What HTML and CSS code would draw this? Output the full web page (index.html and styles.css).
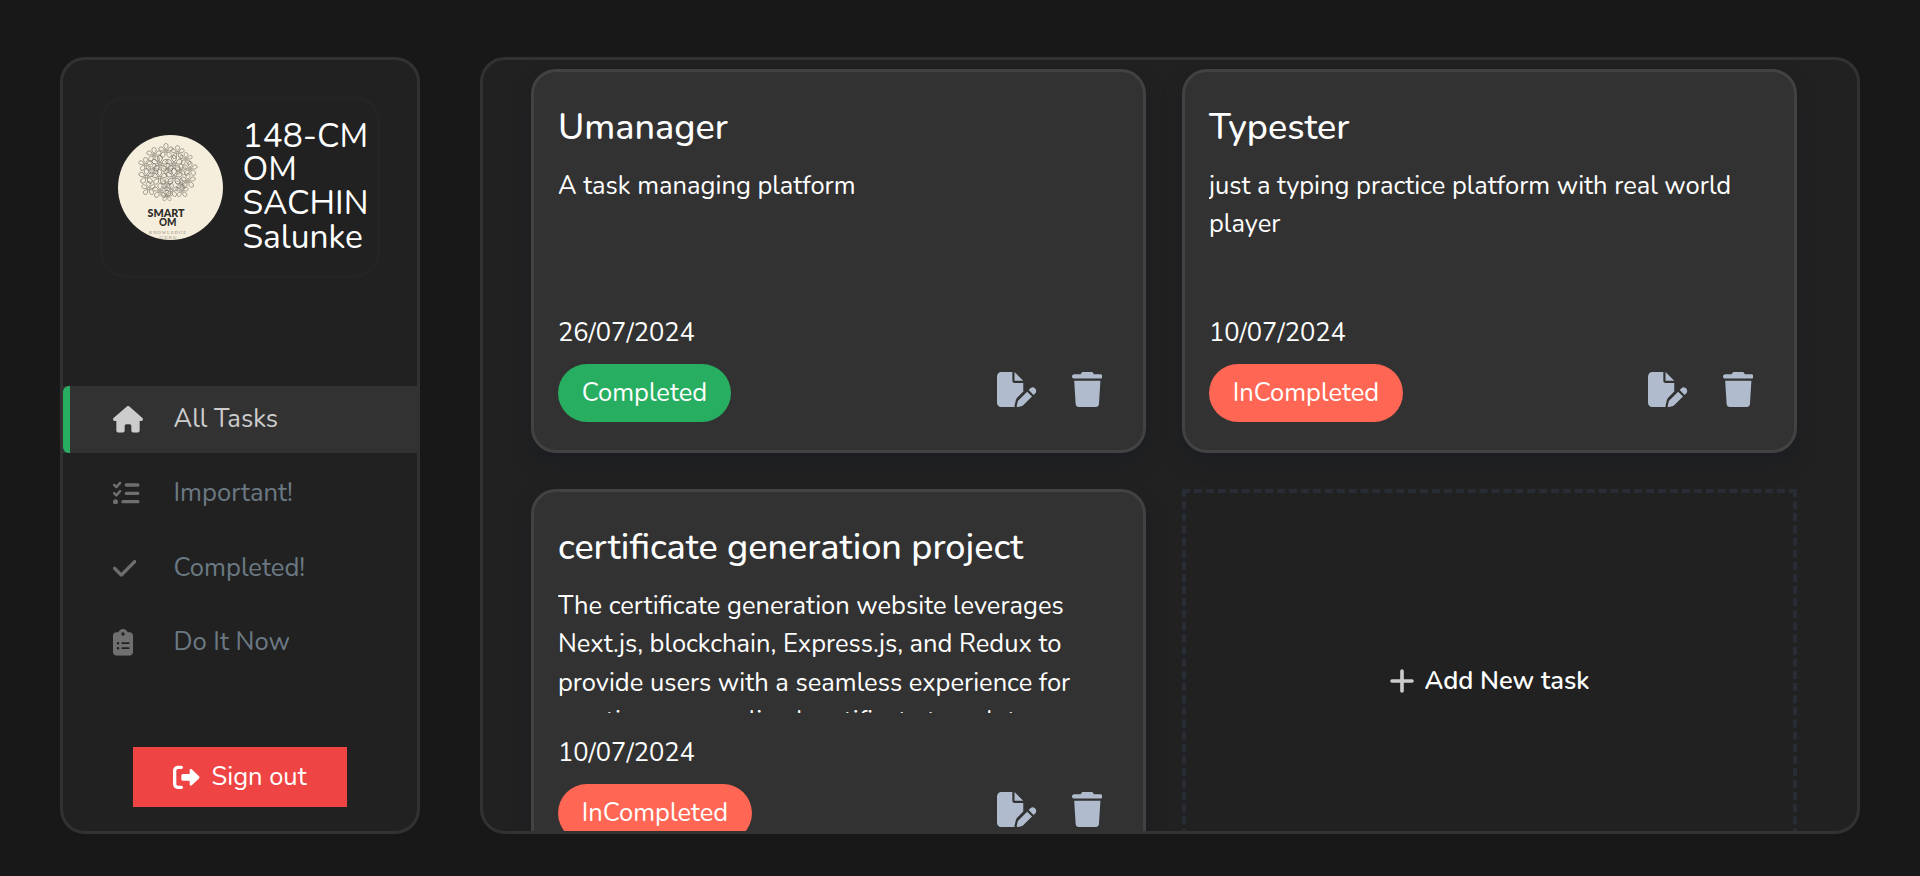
FILE: index.html
```html
<!DOCTYPE html>
<html lang="en">
<head>
<meta charset="utf-8">
<title>Tasks</title>
<link rel="stylesheet" href="styles.css">
</head>
<body>
<svg class="defs" aria-hidden="true">
  <symbol id="i-home" viewBox="0 0 576 512"><path d="M575.8 255.5c0 18-15 32.100-32 32.100h-32l.7 160.200c0 2.700-.2 5.400-.5 8.100V472c0 22.100-17.900 40-40 40H456c-1.100 0-2.200 0-3.300-.1c-1.400.1-2.800.1-4.200.1H416 392c-22.100 0-40-17.900-40-40V448 384c0-17.700-14.300-32-32-32H256c-17.700 0-32 14.300-32 32v64 24c0 22.100-17.900 40-40 40H160 128.100c-1.500 0-3-.1-4.500-.2c-1.200.1-2.400.2-3.600.2H104c-22.100 0-40-17.900-40-40V360c0-.9 0-1.900.1-2.800V287.600H32c-18 0-32-14-32-32.100c0-9 3-17 10-24L266.400 8c7-7 15-8 22-8s15 2 21 7L564.800 231.500c8 7 12 15 11 24z"/></symbol>
  <symbol id="i-list" viewBox="0 0 512 512"><path d="M152.100 38.200c9.900 8.900 10.700 24 1.800 33.900l-72 80c-4.400 4.900-10.600 7.800-17.200 7.900s-12.900-2.400-17.600-7L7 113C-2.300 103.600-2.300 88.400 7 79s24.600-9.400 33.900 0l22.100 22.100 55.100-61.200c8.900-9.900 24-10.700 33.900-1.800zm0 160c9.900 8.900 10.700 24 1.800 33.900l-72 80c-4.400 4.900-10.600 7.800-17.200 7.900s-12.900-2.400-17.600-7L7 273c-9.400-9.400-9.400-24.600 0-33.900s24.600-9.400 33.900 0l22.100 22.100 55.100-61.200c8.900-9.900 24-10.700 33.900-1.800zM224 96c0-17.700 14.300-32 32-32H480c17.700 0 32 14.300 32 32s-14.300 32-32 32H256c-17.700 0-32-14.300-32-32zm0 160c0-17.700 14.300-32 32-32H480c17.700 0 32 14.300 32 32s-14.300 32-32 32H256c-17.700 0-32-14.300-32-32zM160 416c0-17.700 14.300-32 32-32H480c17.700 0 32 14.300 32 32s-14.300 32-32 32H192c-17.700 0-32-14.300-32-32zM48 368a48 48 0 1 1 0 96 48 48 0 1 1 0-96z"/></symbol>
  <symbol id="i-check" viewBox="0 0 448 512"><path d="M438.600 105.400c12.500 12.500 12.500 32.800 0 45.300l-256 256c-12.500 12.500-32.800 12.500-45.300 0l-128-128c-12.500-12.500-12.500-32.800 0-45.300s32.800-12.500 45.300 0L160 338.700 393.400 105.400c12.500-12.500 32.800-12.500 45.300 0z"/></symbol>
  <symbol id="i-clip" viewBox="0 0 384 512"><path d="M192 0c-41.800 0-77.400 26.700-90.500 64H64C28.700 64 0 92.700 0 128V448c0 35.300 28.700 64 64 64H320c35.300 0 64-28.700 64-64V128c0-35.300-28.700-64-64-64H282.500C269.400 26.700 233.800 0 192 0zm0 64a32 32 0 1 1 0 64 32 32 0 1 1 0-64zM72 272a24 24 0 1 1 48 0 24 24 0 1 1 -48 0zm104-16H304c8.800 0 16 7.200 16 16s-7.200 16-16 16H176c-8.800 0-16-7.200-16-16s7.200-16 16-16zM72 368a24 24 0 1 1 48 0 24 24 0 1 1 -48 0zm88 0c0-8.800 7.200-16 16-16H304c8.800 0 16 7.200 16 16s-7.200 16-16 16H176c-8.800 0-16-7.200-16-16z"/></symbol>
  <symbol id="i-out" viewBox="0 0 512 512"><path d="M160 96c17.700 0 32-14.300 32-32s-14.300-32-32-32H96C43 32 0 75 0 128V384c0 53 43 96 96 96h64c17.700 0 32-14.300 32-32s-14.300-32-32-32H96c-17.700 0-32-14.300-32-32V128c0-17.700 14.300-32 32-32h64zM504.500 273.400c4.800-4.500 7.500-10.800 7.500-17.400s-2.700-12.900-7.500-17.400l-144-136c-7-6.600-17.200-8.400-26-4.600s-14.500 12.500-14.500 22v72H192c-17.700 0-32 14.300-32 32v64c0 17.700 14.300 32 32 32H320v72c0 9.600 5.700 18.200 14.500 22s19 2 26-4.600l144-136z"/></symbol>
  <symbol id="i-edit" viewBox="0 0 576 512"><path d="M0 64C0 28.700 28.700 0 64 0H224V128c0 17.700 14.300 32 32 32H384V285.700l-86.800 86.800c-10.300 10.300-17.500 23.100-21 37.200l-18.700 74.900c-2.300 9.200-1.800 18.800 1.300 27.500H64c-35.300 0-64-28.700-64-64V64zm384 64H256V0L384 128zM549.800 235.700l14.400 14.400c15.600 15.600 15.600 40.900 0 56.600l-29.400 29.400-71-71 29.400-29.400c15.600-15.600 40.900-15.600 56.600 0zM311.900 417L441.100 287.800l71 71L382.900 487.900c-4.100 4.100-9.200 7-14.900 8.400l-60.100 15c-5.500 1.400-11.200-.2-15.200-4.200s-5.600-9.700-4.200-15.200l15-60.100c1.400-5.600 4.300-10.800 8.400-14.900z"/></symbol>
  <symbol id="i-trash" viewBox="0 0 448 512"><path d="M135.200 17.700C140.600 6.800 151.700 0 163.800 0H284.200c12.100 0 23.200 6.800 28.600 17.700L320 32h96c17.700 0 32 14.300 32 32s-14.300 32-32 32H32C14.300 96 0 81.700 0 64S14.300 32 32 32h96l7.200-14.300zM32 128H416L394.800 467c-1.600 25.300-22.600 45-47.900 45H101.100c-25.300 0-46.300-19.700-47.900-45L32 128z"/></symbol>
  <symbol id="i-plus" viewBox="0 0 24 24"><path d="M12 2v20M2 12h20" fill="none" stroke="currentColor" stroke-width="3.600" stroke-linecap="round"/></symbol>
  <symbol id="flower" viewBox="-10 -10 20 20"><g fill="none" stroke="#47453f" stroke-width=".8"><circle r="1.500"/><path d="M0-2C-4-5-3-9 0-9.500 3-9 4-5 0-2M2-1C4-6 8-6 9-3 9 0 5 1 2-1M1.500 1.500C6 1 8 5 6 7.500 3 9 0 6 1.500 1.500M-1.500 1.500C0 6-3 9-6 7.500-8 5-6 1-1.500 1.500M-2-1C-5 1-9 0-9-3-8-6-4-6-2-1"/></g></symbol>
</svg>

<div class="app">
  <nav class="sidebar">
    <div class="profile">
      <svg class="avatar" viewBox="0 0 105 105">
        <circle cx="52.500" cy="52.500" r="52.500" fill="#f6eedd"/>
        <g opacity=".8">
          <use href="#flower" x="40" y="8" width="16" height="16"/><use href="#flower" x="52" y="10" width="15" height="15"/>
          <use href="#flower" x="28" y="12" width="16" height="16"/><use href="#flower" x="20" y="22" width="15" height="15"/>
          <use href="#flower" x="33" y="20" width="18" height="18"/><use href="#flower" x="47" y="20" width="18" height="18"/>
          <use href="#flower" x="61" y="17" width="14" height="14"/><use href="#flower" x="64" y="26" width="16" height="16"/>
          <use href="#flower" x="20" y="33" width="17" height="17"/><use href="#flower" x="33" y="34" width="17" height="17"/>
          <use href="#flower" x="47" y="33" width="18" height="18"/><use href="#flower" x="62" y="38" width="16" height="16"/>
          <use href="#flower" x="23" y="46" width="15" height="15"/><use href="#flower" x="34" y="48" width="16" height="16"/>
          <use href="#flower" x="46" y="48" width="15" height="15"/><use href="#flower" x="57" y="49" width="14" height="14"/>
          <use href="#flower" x="43" y="55" width="12" height="12"/><use href="#flower" x="30" y="28" width="12" height="12"/>
          <use href="#flower" x="44" y="28" width="12" height="12"/><use href="#flower" x="57" y="29" width="12" height="12"/>
          <use href="#flower" x="43" y="43" width="12" height="12"/><use href="#flower" x="57" y="43" width="12" height="12"/>
        </g>
        <text class="logo-bold" x="29.500" y="82" textLength="37" lengthAdjust="spacingAndGlyphs">SMART</text>
        <text class="logo-bold" x="41" y="91.300" textLength="17.500" lengthAdjust="spacingAndGlyphs">OM</text>
        <text class="logo-thin" x="31" y="98.700" textLength="37">KNOWLEDGE</text>
        <text class="logo-thin" x="41.500" y="104.300" textLength="17">GURU</text>
      </svg>
      <h1 class="name">148-CM OM SACHIN Salunke</h1>
    </div>
    <ul class="menu">
      <li class="item active"><svg class="ic w576"><use href="#i-home"/></svg><span>All Tasks</span></li>
      <li class="item"><svg class="ic w512"><use href="#i-list"/></svg><span>Important!</span></li>
      <li class="item"><svg class="ic w448"><use href="#i-check"/></svg><span>Completed!</span></li>
      <li class="item"><svg class="ic w384"><use href="#i-clip"/></svg><span>Do It Now</span></li>
    </ul>
    <button class="signout"><svg class="ic w512"><use href="#i-out"/></svg><span>Sign out</span></button>
  </nav>

  <main class="board">
    <div class="grid">
      <article class="card">
        <h2>Umanager</h2>
        <p class="desc">A task managing platform</p>
        <p class="date">26/07/2024</p>
        <div class="foot"><span class="pill done">Completed</span><svg class="act edit"><use href="#i-edit"/></svg><svg class="act trash"><use href="#i-trash"/></svg></div>
      </article>
      <article class="card">
        <h2>Typester</h2>
        <p class="desc">just a typing practice platform with real world player</p>
        <p class="date">10/07/2024</p>
        <div class="foot"><span class="pill">InCompleted</span><svg class="act edit"><use href="#i-edit"/></svg><svg class="act trash"><use href="#i-trash"/></svg></div>
      </article>
      <article class="card">
        <h2>certificate generation project</h2>
        <p class="desc">The certificate generation website leverages Next.js, blockchain, Express.js, and Redux to provide users with a seamless experience for creating personalized certificate templates.</p>
        <p class="date">10/07/2024</p>
        <div class="foot"><span class="pill">InCompleted</span><svg class="act edit"><use href="#i-edit"/></svg><svg class="act trash"><use href="#i-trash"/></svg></div>
      </article>
      <button class="add"><svg class="plus"><use href="#i-plus"/></svg><span>Add New task</span></button>
    </div>
  </main>
</div>
</body>
</html>
```
FILE: styles.css
```css
* { box-sizing: border-box; margin: 0; padding: 0; }
body {
  height: 100vh;
  overflow: hidden;
  background: #181818;
  color: #fff;
  font: 400 25.5px/38.6px "Nunito", "Lato", sans-serif;
}
.defs { display: none; }
button { font: inherit; color: inherit; border: 0; background: none; }
.app { display: flex; gap: 60px; height: 834px; padding: 57px 60px 0; }

.sidebar {
  width: 360px;
  flex: none;
  display: flex;
  flex-direction: column;
  border: 3px solid #323232;
  border-radius: 25px;
  background: #212121;
}
.profile {
  display: flex;
  align-items: center;
  gap: 19.500px;
  height: 182px;
  margin: 36px 37px 0;
  padding: 0 0 0 15px;
  border: 3px solid #242424;
  border-radius: 25px;
}
.avatar { width: 105px; height: 105px; flex: none; }
.logo-bold { font: 900 11px "Lato", sans-serif; fill: #2b2a28; }
.logo-thin { font: 400 4.6px "Liberation Serif", serif; fill: #8d877a; }
.name { width: 130px; font-size: 33.5px; font-weight: 400; line-height: 33.6px; }

.menu { list-style: none; margin-top: 108px; display: flex; flex-direction: column; gap: 7.300px; }
.item {
  position: relative;
  display: grid;
  grid-template-columns: 60.5px 1fr;
  align-items: center;
  height: 67px;
  padding-left: 50px;
  color: #6c7983;
  font-size: 25.6px;
}
.item:nth-child(2) { padding-bottom: 1px; }
.ic { height: 26.67px; fill: #6f6f6f; }
.w576 { width: 30px; }
.w512 { width: 26.67px; }
.w448 { width: 23.33px; }
.w384 { width: 20px; }
.item.active { background: #323232; color: #ccc; }
.active .ic { fill: #ccc; }
.item.active::before {
  content: "";
  position: absolute;
  inset: 0 auto 0 0;
  width: 7px;
  border-radius: 6px 0 0 6px;
  background: #27ae60;
}
.signout {
  display: flex;
  align-items: center;
  justify-content: center;
  gap: 11.500px;
  width: 214px;
  height: 60px;
  margin: auto auto 24px 70px;
  background: #ef4444;
}
.signout .ic { fill: #fff; }

.board {
  flex: 1;
  overflow: hidden;
  border: 3px solid #323232;
  border-radius: 25px;
  background: #212121;
}
.grid {
  display: grid;
  grid-template-columns: 1fr 1fr;
  grid-auto-rows: 384px;
  gap: 36px;
  padding: 9px 60px 0 48px;
}
.card {
  display: flex;
  flex-direction: column;
  padding: 29px 24px 28px;
  border: 3px solid #424242;
  border-radius: 25px;
  background: #323232;
  box-shadow: 0 10px 20px rgba(19, 24, 38, .36);
}
.card h2 { font-size: 36px; font-weight: 500; line-height: 54px; }
.desc { height: 126px; margin-top: 12px; overflow: hidden; padding-right: 25px; line-height: 38.4px; }
.date { margin-top: 21.200px; }
.foot { display: flex; align-items: center; margin-top: 11.200px; }
.pill {
  height: 58px;
  padding: 0 23.800px;
  border-radius: 30px;
  background: #ff6754;
  line-height: 58px;
  margin-right: auto;
}
.pill.done { background: #27ae60; }
.act { height: 35px; fill: #b0bccd; margin-bottom: 7.500px; }
.edit { width: 39.4px; }
.trash { width: 30.6px; margin: 0 16.800px 7.500px 35px; }
.add {
  display: flex;
  align-items: center;
  justify-content: center;
  gap: 11px;
  border: 4px dashed #282d35;
  font-weight: 600;
}
.plus { width: 24px; height: 24px; color: #ccc; }
```
